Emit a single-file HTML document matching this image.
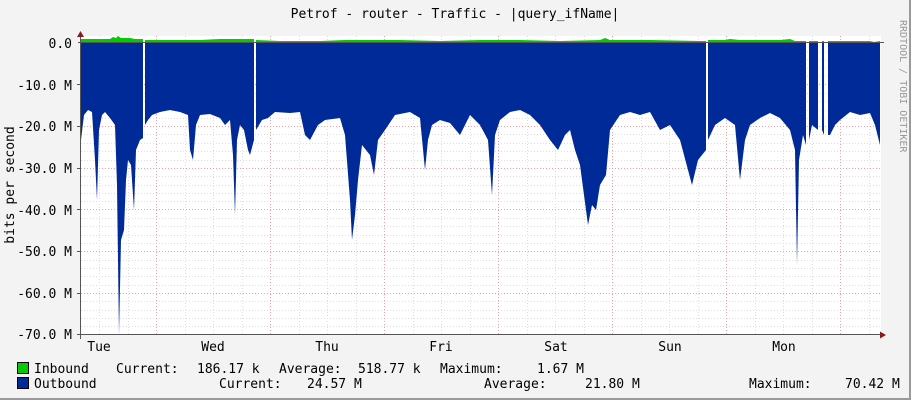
<!DOCTYPE html>
<html><head><meta charset="utf-8"><style>
html,body{margin:0;padding:0}
body{width:911px;height:400px;overflow:hidden;background:#f3f3f3}
svg{display:block}
text{font-family:"DejaVu Sans Mono","Liberation Mono",monospace;font-size:13px;fill:#000}
</style></head><body>
<svg width="911" height="400" viewBox="0 0 911 400" xmlns="http://www.w3.org/2000/svg">
<rect x="0" y="0" width="911" height="400" fill="#f3f3f3"/>
<rect x="909" y="0" width="2" height="400" fill="#9a9a9a"/>
<rect x="0" y="398" width="911" height="2" fill="#9a9a9a"/>
<rect x="81" y="36" width="800" height="299" fill="#fff"/>
<g stroke="#ddd" stroke-width="1" stroke-dasharray="1,2">
<path d="M81 51.5H881M81 59.5H881M81 68.5H881M81 76.5H881M81 93.5H881M81 101.5H881M81 110.5H881M81 118.5H881M81 134.5H881M81 143.5H881M81 151.5H881M81 160.5H881M81 176.5H881M81 185.5H881M81 193.5H881M81 201.5H881M81 218.5H881M81 226.5H881M81 235.5H881M81 243.5H881M81 260.5H881M81 268.5H881M81 276.5H881M81 285.5H881M81 301.5H881M81 310.5H881M81 318.5H881M81 326.5H881"/>
<path d="M99.5 36V335M128.5 36V335M185.5 36V335M213.5 36V335M242.5 36V335M299.5 36V335M327.5 36V335M356.5 36V335M413.5 36V335M441.5 36V335M470.5 36V335M527.5 36V335M555.5 36V335M584.5 36V335M641.5 36V335M669.5 36V335M698.5 36V335M755.5 36V335M783.5 36V335M812.5 36V335M869.5 36V335"/>
</g>
<g stroke="#f0a0a0" stroke-width="1" stroke-dasharray="1,2">
<path d="M81 84.5H881M81 126.5H881M81 168.5H881M81 209.5H881M81 251.5H881M81 293.5H881M81 334.5H881"/>
<path d="M156.5 36V335M270.5 36V335M384.5 36V335M498.5 36V335M612.5 36V335M726.5 36V335M840.5 36V335"/>
</g>
<path fill="#00cc00" d="M81 43V39L110 39L113 37L116 38L118 36L121 38L130 38L135 39L143 39V43ZM145 43V40L160 40L200 40L220 39L254 39V43ZM256 43V40L280 41L320 41L345 40L360 40L400 40L440 41L480 40L520 40L560 41L600 40L605 38L610 40L650 40L700 41L706 41V43ZM708 43V40L725 40L730 39L740 40L780 40L790 39L795 41L806 41V43ZM809 43V41L818 41V43ZM822 43V41L824 41V43ZM828 43V41L840 41L870 41L874 42L880 41V43Z"/>
<path fill="#002a97" d="M81 43V140L84 115L88 110L92 112L95 160L97 200L99 130L102 115L105 112L110 118L115 125L117 185L119 335L121 240L124 230L126 180L128 160L131 165L134 210L136 150L140 140L143 138V43ZM145 43V125L148 120L152 115L160 112L170 110L180 112L188 115L190 150L193 160L196 125L200 115L210 114L220 118L225 125L230 120L233 155L235 215L237 140L240 125L244 130L248 150L250 155L254 140V43ZM256 43V130L262 120L268 118L275 112L290 113L300 112L305 135L310 140L318 125L325 120L340 118L345 135L350 200L352 240L355 215L358 180L362 145L370 155L374 175L378 140L385 130L395 115L410 112L420 118L425 170L428 140L432 125L440 120L450 123L460 135L470 115L480 125L488 140L492 195L495 135L500 120L510 112L520 110L530 115L540 125L550 140L558 150L565 135L570 130L575 150L580 165L588 225L592 205L596 210L600 185L606 175L610 130L620 115L630 112L640 115L650 112L660 130L670 125L680 140L688 170L692 185L698 160L702 155L706 150V43ZM708 43V140L715 125L725 118L735 125L740 180L745 140L750 125L760 118L770 113L780 118L790 130L795 150L797 265L799 160L803 135L806 145V43ZM809 43V140L812 125L818 130V43ZM822 43V130L824 135V43ZM828 43V135L830 135L835 125L840 120L850 112L860 115L870 113L875 125L880 145V43Z"/>
<path d="M80.5 33V339M78 42.5H884M77 334.5H884" stroke="#555" stroke-width="1" fill="none"/>
<path d="M77 84.5H81M77 126.5H81M77 168.5H81M77 209.5H81M77 251.5H81M77 293.5H81" stroke="#555"/>
<path d="M80.5 31L77 37H84Z M886 335L880 331.5V338.5Z" fill="#8b1a1a"/>
<text x="455" y="18" text-anchor="middle">Petrof - router - Traffic - |query_ifName|</text>
<g text-anchor="end">
<text x="72" y="48">0.0</text>
<text x="72" y="90">-10.0 M</text>
<text x="72" y="131">-20.0 M</text>
<text x="72" y="173">-30.0 M</text>
<text x="72" y="215">-40.0 M</text>
<text x="72" y="256">-50.0 M</text>
<text x="72" y="298">-60.0 M</text>
<text x="72" y="339">-70.0 M</text>
</g>
<g text-anchor="middle">
<text x="99" y="351">Tue</text>
<text x="213" y="351">Wed</text>
<text x="327" y="351">Thu</text>
<text x="441" y="351">Fri</text>
<text x="556" y="351">Sat</text>
<text x="670" y="351">Sun</text>
<text x="784" y="351">Mon</text>
</g>
<text transform="translate(14,185) rotate(-90)" text-anchor="middle">bits per second</text>
<text transform="translate(900,20) rotate(90)" style="font-size:10px;fill:#999">RRDTOOL / TOBI OETIKER</text>
<rect x="17.5" y="362.5" width="11" height="11" fill="#00cc00" stroke="#000"/>
<rect x="17.5" y="377.5" width="11" height="11" fill="#002a97" stroke="#000"/>
<text x="34" y="373">Inbound</text>
<text x="116" y="373">Current:</text>
<text x="197" y="373">186.17 k</text>
<text x="279" y="373">Average:</text>
<text x="358" y="373">518.77 k</text>
<text x="440" y="373">Maximum:</text>
<text x="537" y="373">1.67 M</text>
<text x="34" y="388">Outbound</text>
<text x="219" y="388">Current:</text>
<text x="307" y="388">24.57 M</text>
<text x="484" y="388">Average:</text>
<text x="585" y="388">21.80 M</text>
<text x="749" y="388">Maximum:</text>
<text x="845" y="388">70.42 M</text>
</svg>
</body></html>
